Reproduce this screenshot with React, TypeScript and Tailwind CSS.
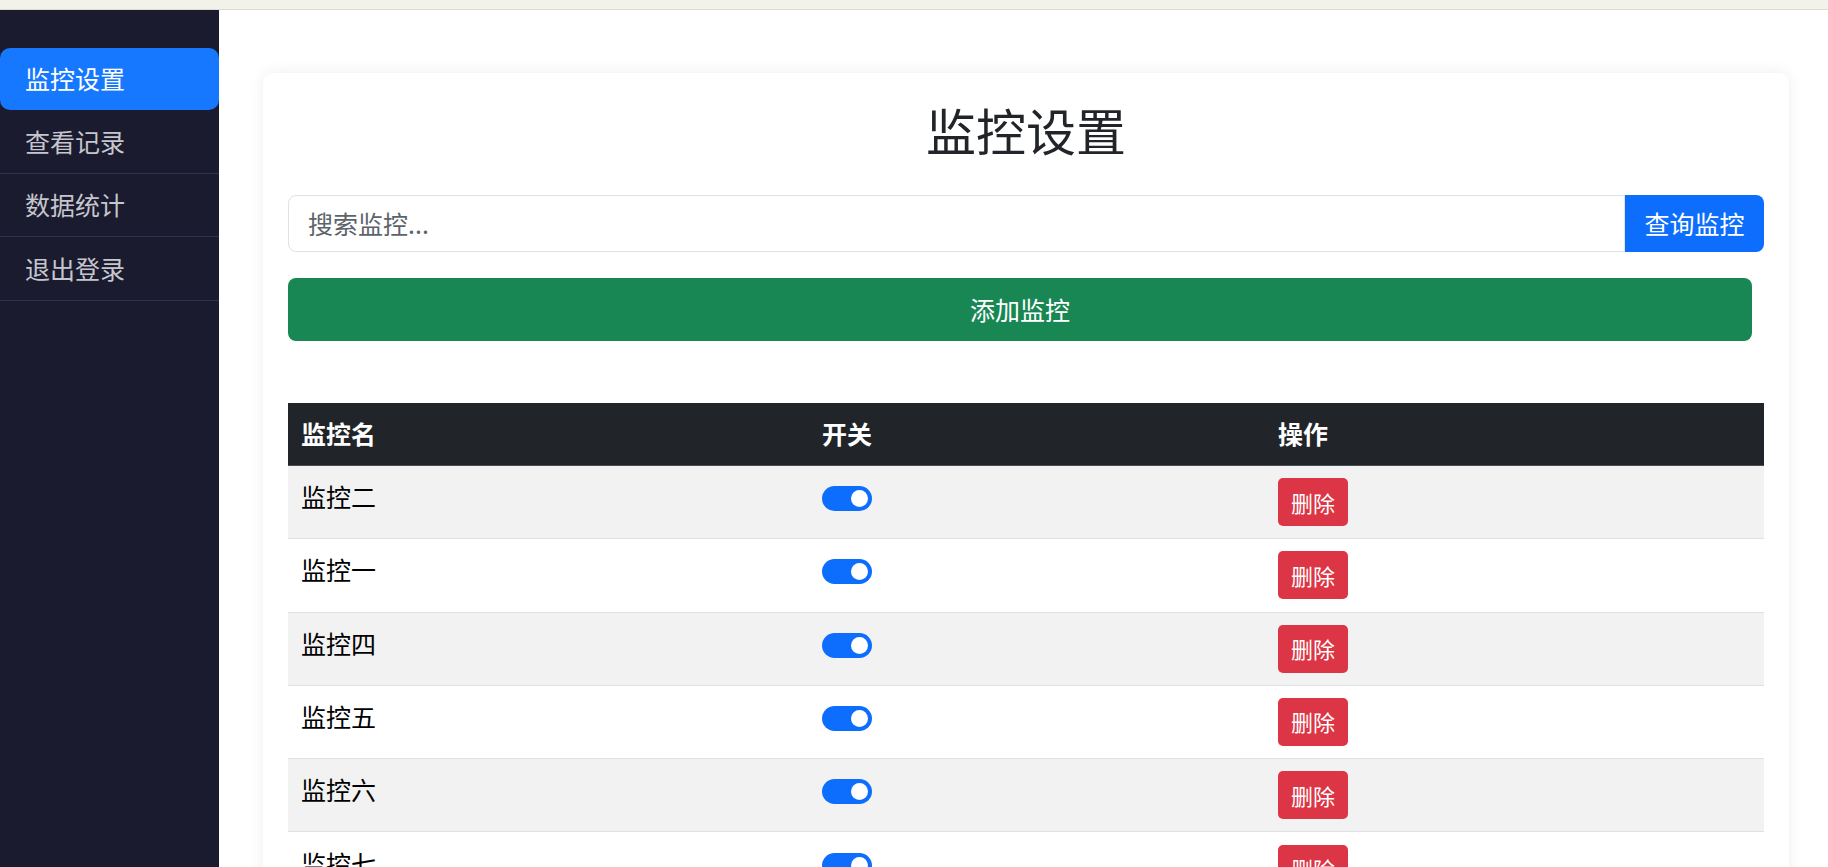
// 监控设置页面
import React from "react";

const font = "font-['Noto_Sans_CJK_SC','Noto_Sans',sans-serif]";

const menu = ["监控设置", "查看记录", "数据统计", "退出登录"];
const monitors = ["监控二", "监控一", "监控四", "监控五", "监控六", "监控七"];

const Toggle: React.FC = () => (
  <div className="mt-[8px] flex h-[25px] w-[50px] items-center justify-end rounded-full bg-[#0d6efd] pr-[4px]">
    <div className="h-[17px] w-[17px] rounded-full bg-white" />
  </div>
);

const Sidebar: React.FC = () => (
  <aside className="w-[219px] shrink-0 bg-[#1b1b2f] pt-[38px]">
    {menu.map((item, i) =>
      i === 0 ? (
        <div key={item} className="flex h-[62px] items-center rounded-[10px] bg-[#1677ff] pl-[25px] text-[25px] text-white">
          {item}
        </div>
      ) : (
        <div
          key={item}
          className="flex h-[63.7px] items-center border-b border-[#33344a] pl-[25px] text-[25px] text-[#c6c6ce]"
        >
          {item}
        </div>
      )
    )}
  </aside>
);

const MonitorTable: React.FC = () => (
  <div className="mt-[62px] w-full text-[25px]">
    <div className="grid h-[63px] grid-cols-[521px_456px_1fr] items-center border-b border-[#4b4f54] bg-[#212529] font-bold text-white">
      <div className="pl-[13px]">监控名</div>
      <div className="pl-[13px]">开关</div>
      <div className="pl-[13px]">操作</div>
    </div>
    {monitors.map((name, i) => (
      <div
        key={name}
        className={
          "grid grid-cols-[521px_456px_1fr] border-b border-[#dee2e6] text-black " +
          (i % 2 === 0 ? "bg-[#f2f2f2]" : "bg-white")
        }
      >
        <div className="py-[12.15px] pl-[13px] leading-[37px]">{name}</div>
        <div className="py-[12.15px] pl-[13px]">
          <Toggle />
        </div>
        <div className="py-[12.15px] pl-[13px]">
          <button className="h-[48px] w-[70px] rounded-[5px] bg-[#dc3545] text-[22px] text-white">删除</button>
        </div>
      </div>
    ))}
  </div>
);

export default function App() {
  return (
    <div className={`min-h-screen flex flex-col bg-white ${font}`}>
      <div className="h-[10px] shrink-0 border-b border-[#dcdcd2] bg-[#f3f2ea]" />
      <div className="flex flex-1">
        <Sidebar />
        <main className="flex-1 pl-[44px] pr-[39px] pt-[63px]">
          <div className="rounded-[10px] bg-white px-[25px] pt-[26px] pb-[25px] shadow-[0_0_16px_rgba(0,0,0,0.07)]">
            <h1 className="text-center text-[50px] font-normal leading-[60px] text-[#212529]">监控设置</h1>
            <div className="mt-[36px] flex h-[57px]">
              <input
                className="flex-1 rounded-l-[8px] border border-[#dee2e6] pl-[19px] text-[25px] outline-none placeholder:text-[#5c636a]"
                placeholder="搜索监控..."
              />
              <button className="w-[139px] rounded-r-[8px] bg-[#0d6efd] text-[25px] text-white">查询监控</button>
            </div>
            <button className="mt-[26px] h-[63px] w-[calc(100%-12px)] rounded-[8px] bg-[#198754] text-[25px] text-white">
              添加监控
            </button>
            <MonitorTable />
          </div>
        </main>
      </div>
    </div>
  );
}
